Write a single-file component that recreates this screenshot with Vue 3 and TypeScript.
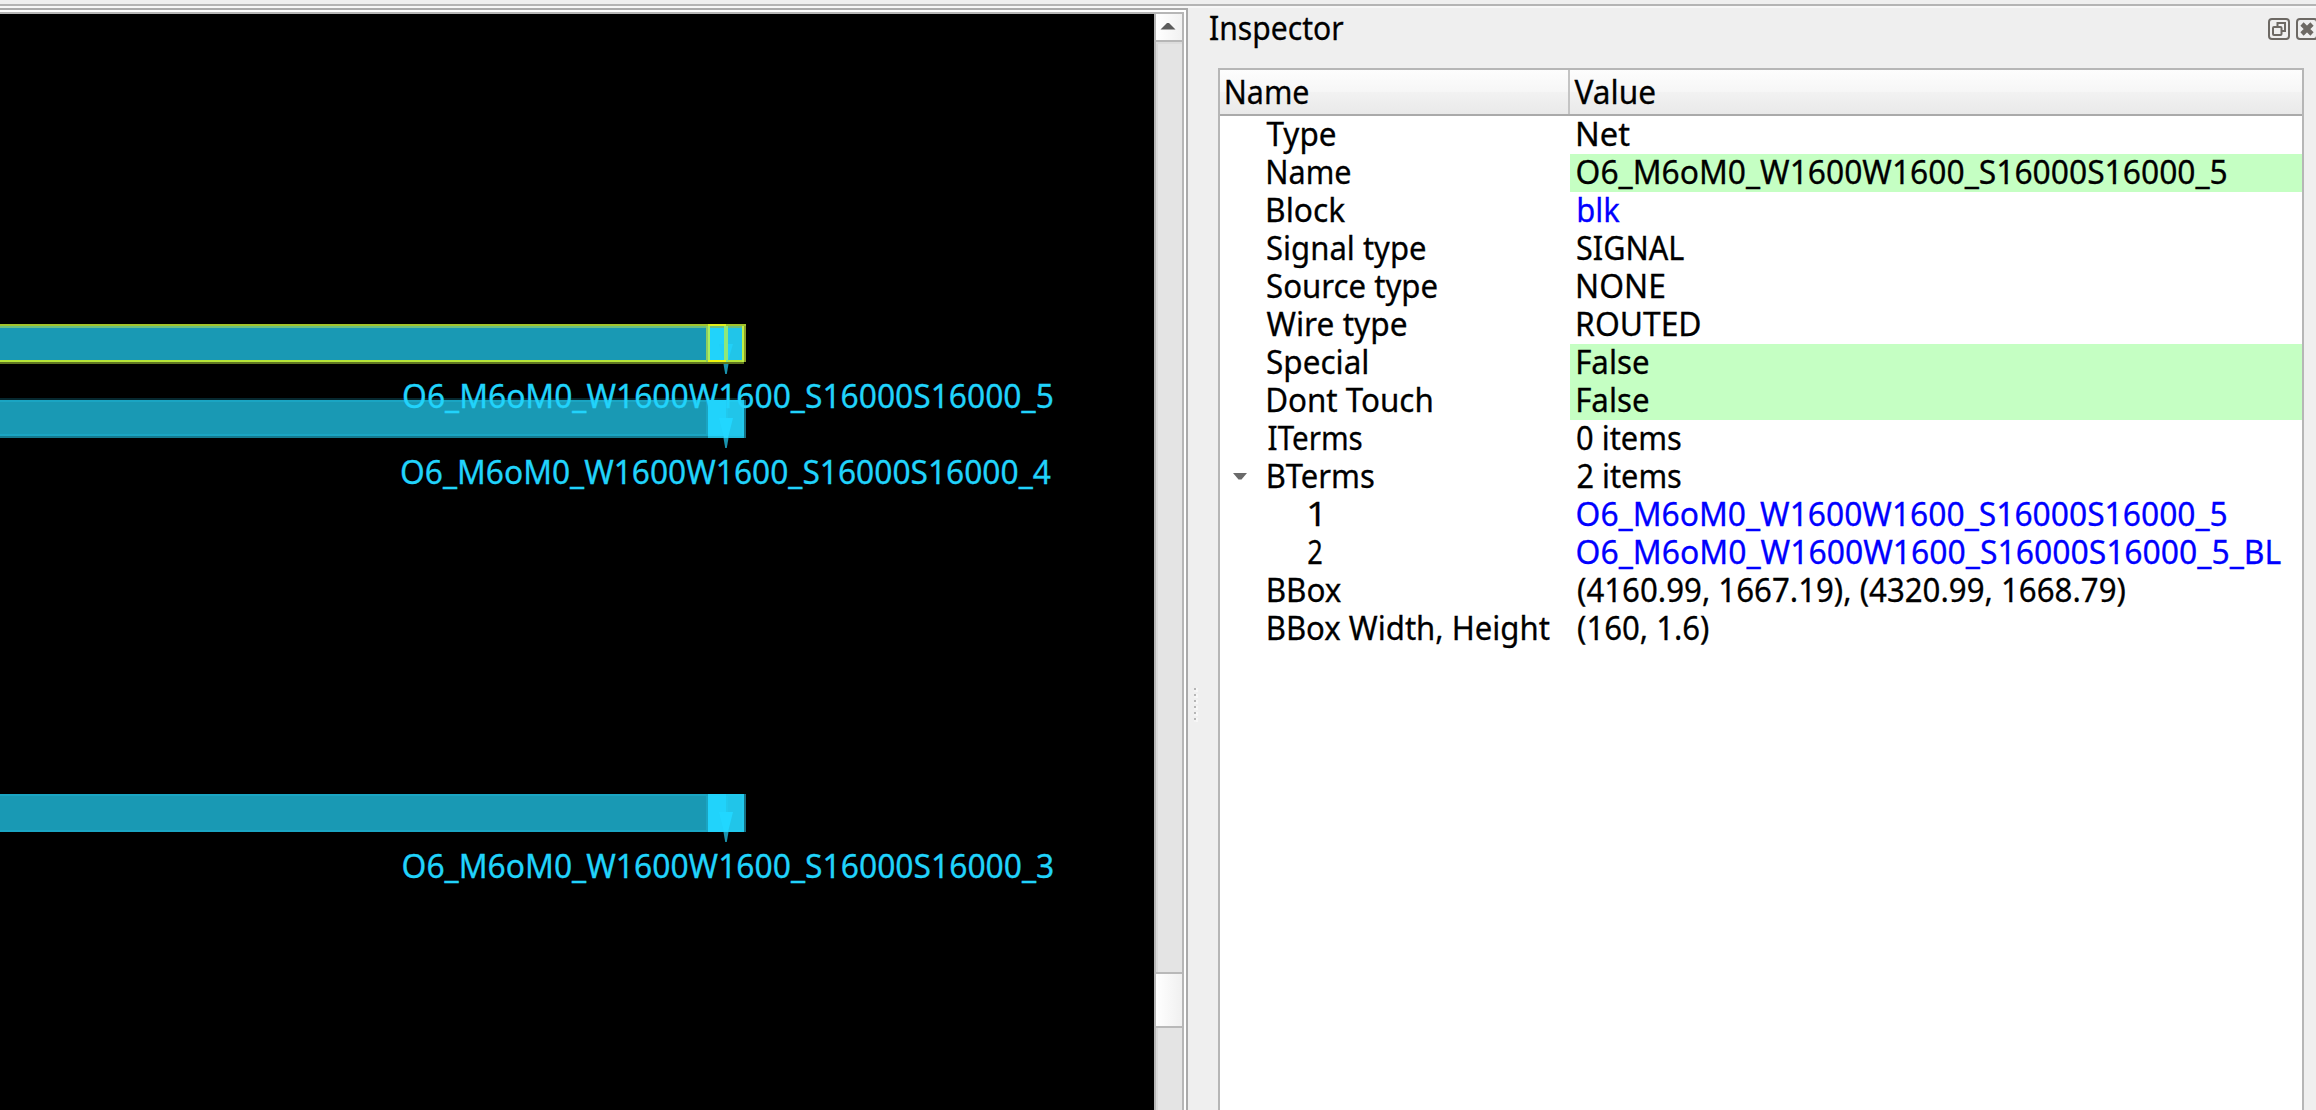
<script setup lang="ts">
import type { Directive } from 'vue'

interface Row {
  name: string
  value: string
  /** ink extents [start, end] of the name and value, in window px */
  n: [number, number]
  v: [number, number]
  kind?: 'link' | 'edit'
  child?: boolean
  open?: boolean
}

const rows: Row[] = [
  { name: 'Type', value: 'Net', n: [1266.5, 1335], v: [1578, 1630] },
  { name: 'Name', value: 'O6_M6oM0_W1600W1600_S16000S16000_5', n: [1268, 1350], v: [1577.5, 2226], kind: 'edit' },
  { name: 'Block', value: 'blk', n: [1268, 1345.5], v: [1578, 1620], kind: 'link' },
  { name: 'Signal type', value: 'SIGNAL', n: [1267, 1425], v: [1577, 1684] },
  { name: 'Source type', value: 'NONE', n: [1267, 1436.5], v: [1578, 1664.5] },
  { name: 'Wire type', value: 'ROUTED', n: [1266.5, 1406], v: [1578, 1700.5] },
  { name: 'Special', value: 'False', n: [1267, 1367], v: [1578, 1648], kind: 'edit' },
  { name: 'Dont Touch', value: 'False', n: [1268, 1431.5], v: [1578, 1648], kind: 'edit' },
  { name: 'ITerms', value: '0 items', n: [1268.5, 1362], v: [1577, 1681] },
  { name: 'BTerms', value: '2 items', n: [1268.5, 1374], v: [1577.5, 1681], open: true },
  { name: '1', value: 'O6_M6oM0_W1600W1600_S16000S16000_5', n: [1308.5, 1319.5], v: [1577.5, 2226], kind: 'link', child: true },
  { name: '2', value: 'O6_M6oM0_W1600W1600_S16000S16000_5_BL', n: [1308, 1322], v: [1577.5, 2281], kind: 'link', child: true },
  { name: 'BBox', value: '(4160.99, 1667.19), (4320.99, 1668.79)', n: [1268.5, 1341], v: [1578, 2125] },
  { name: 'BBox Width, Height', value: '(160, 1.6)', n: [1268.5, 1550], v: [1578, 1708.5] },
]

const wires = [
  { top: 324, selected: true },
  { top: 400, selected: false },
  { top: 794, selected: false },
]

const labels = [
  { text: 'O6_M6oM0_W1600W1600_S16000S16000_5', x: [404, 1052], y: 408 },
  { text: 'O6_M6oM0_W1600W1600_S16000S16000_4', x: [402, 1051], y: 484 },
  { text: 'O6_M6oM0_W1600W1600_S16000S16000_3', x: [403.5, 1052.5], y: 878 },
]

// Scales a single line of text so that its ink spans exactly the given range.
const ctx = document.createElement('canvas').getContext('2d')!
const vFit: Directive<HTMLElement, number[]> = {
  mounted(el, { value: [from, to] }) {
    const cs = getComputedStyle(el)
    ctx.font = `${cs.fontSize} ${cs.fontFamily}`
    const m = ctx.measureText(el.textContent ?? '')
    const scale = (to - from) / (m.actualBoundingBoxRight + m.actualBoundingBoxLeft)
    const dx = from - el.getBoundingClientRect().left + m.actualBoundingBoxLeft * scale
    el.style.transform = `translateX(${dx}px) scaleX(${scale})`
  },
}
</script>

<template>
  <div class="window">
    <div class="viewer">
      <div class="canvas">
        <svg width="1154" height="1096" viewBox="0 14 1154 1096" shape-rendering="crispEdges">
          <g v-for="w in wires" :key="w.top">
            <template v-if="w.selected">
              <rect x="0" :y="w.top + 4" width="706" height="32" fill="#1999b4" />
              <rect x="708" :y="w.top + 4" width="18" height="32" fill="#21d3fb" />
              <rect x="726" :y="w.top + 4" width="16" height="32" fill="#21c5e9" />
              <path d="M719 344h14l-5 17h-4z" fill="#21d0f8" shape-rendering="auto" />
              <rect x="0" :y="w.top" width="746" height="2" fill="#a2c32c" />
              <rect x="0" :y="w.top + 2" width="744" height="2" fill="#68c086" />
              <rect x="0" :y="w.top + 36" width="744" height="2" fill="#b6e538" />
              <rect x="0" :y="w.top + 38" width="744" height="2" fill="#5f7720" />
              <rect x="706" :y="w.top + 2" width="2" height="36" fill="#8fcc60" />
              <rect x="708" :y="w.top + 2" width="2" height="36" fill="#a8f062" />
              <rect x="724" :y="w.top + 2" width="4" height="36" fill="#8ee87a" />
              <rect x="742" :y="w.top + 2" width="2" height="36" fill="#c0f045" />
              <rect x="744" :y="w.top + 2" width="2" height="36" fill="#8ba02b" />
              <rect x="708" :y="w.top" width="18" height="2" fill="#e1ee1b" />
              <rect x="708" :y="w.top + 36" width="18" height="2" fill="#f1f80d" />
            </template>
            <template v-else>
              <rect x="0" :y="w.top" width="708" height="38" fill="#1aa5c3" />
              <rect x="0" :y="w.top + 2" width="706" height="34" fill="#1999b4" />
              <rect x="708" :y="w.top" width="18" height="38" fill="#21d3fb" />
              <rect x="726" :y="w.top" width="18" height="38" fill="#21c9ed" />
              <rect x="728" :y="w.top + 2" width="14" height="34" fill="#21c5e9" />
              <rect x="744" :y="w.top" width="2" height="38" fill="#156f82" />
              <template v-if="w.top === 400">
                <rect x="0" y="398" width="744" height="2" fill="#06272e" />
                <rect x="0" y="434" width="706" height="2" fill="#1aa5c3" />
                <rect x="0" y="436" width="708" height="2" fill="#15798e" />
                <rect x="708" y="436" width="36" height="2" fill="#20bbdc" />
              </template>
              <path :d="`M719 ${w.top + 18}h14l-5 20h-4z`" fill="#21d7ff" shape-rendering="auto" />
            </template>
            <path
              :d="`M723.5 ${w.top + (w.selected ? 40 : 38)}h5l-1.7 10h-1.6z`"
              fill="#1993ae" shape-rendering="auto"
            />
          </g>
        </svg>
        <span
          v-for="l in labels" :key="l.y" v-fit="l.x" class="text net"
          :style="{ top: l.y - 45 + 'px' }"
        >{{ l.text }}</span>
      </div>
      <div class="scroll">
        <div class="step">
          <svg width="16" height="8" viewBox="0 0 16 8"><path d="M.5 7.500L7 1h2l6.500 6.500z" fill="#5b5b5b" /></svg>
        </div>
        <div class="trough upper"></div>
        <div class="thumb"></div>
        <div class="trough lower"></div>
      </div>
    </div>

    <div class="splitter"><i v-for="i in 6" :key="i"></i></div>

    <section class="dock">
      <header class="title">
        <span v-fit="[1210, 1344]" class="text">Inspector</span>
        <div class="buttons">
          <svg width="22" height="22" viewBox="0 0 22 22" fill="none" stroke="#6d6964" stroke-width="2">
            <rect x="1" y="1" width="20" height="20" rx="3" />
            <path d="M9.500 8V5H17v8h-3" />
            <rect x="5" y="9" width="8.500" height="8" rx="1" />
          </svg>
          <svg width="22" height="22" viewBox="0 0 22 22" fill="none" stroke="#6d6964" stroke-width="2">
            <rect x="1" y="1" width="20" height="20" rx="3" />
            <path d="M6 6l10 10M16 6L6 16" stroke-width="4.600" />
          </svg>
        </div>
      </header>
      <div class="tree">
        <div class="head">
          <div class="col-name"><span v-fit="[1226.5, 1308]" class="text">Name</span></div>
          <div class="col-value"><span v-fit="[1574.5, 1654.5]" class="text">Value</span></div>
        </div>
        <div v-for="(r, i) in rows" :key="i" class="row">
          <div class="cell name" :class="{ child: r.child }">
            <svg v-if="r.open" class="arrow" width="16" height="8" viewBox="0 0 16 8">
              <path d="M1 1h14L9.500 7.500h-3z" fill="#6a6a6a" />
            </svg>
            <span v-fit="r.n" class="text">{{ r.name }}</span>
          </div>
          <div class="cell value" :class="r.kind"><span v-fit="r.v" class="text">{{ r.value }}</span></div>
        </div>
      </div>
    </section>
  </div>
</template>

<style>
body { background: #efefef; overflow: hidden; }
</style>

<style scoped>
* { box-sizing: border-box; }
.window {
  width: 2316px;
  height: 1110px;
  display: flex;
  overflow: hidden;
  background: linear-gradient(#efefef 4px, #b4b4b4 4px 6px, #f7f7f7 6px 8px, #efefef 8px);
  font-family: 'Noto Sans', 'Open Sans', sans-serif;
  font-size: 33px;
  color: #000;
  -webkit-text-stroke: 0.3px;
}
.text {
  display: block;
  width: fit-content;
  height: 38px;
  white-space: pre;
  line-height: 38px;
  transform-origin: 0 50%;
}
.viewer {
  width: 1188px;
  height: 1102px;
  margin-top: 8px;
  flex: none;
  display: flex;
  background: #fff;
  border-top: 2px solid #aaa;
  border-right: 2px solid #aaa;
  padding: 2px 2px 0 0;
}
.canvas {
  position: relative;
  width: 1154px;
  height: 1098px;
  background: #000;
  border-top: 2px solid #b6b6b6;
  flex: none;
}
.canvas svg { display: block; }
.net { position: absolute; left: 0; color: #21d3fb; }
.scroll {
  width: 30px;
  height: 1098px;
  border: solid #b6b6b6;
  border-width: 2px 2px 0 2px;
  display: flex;
  flex-direction: column;
  background: #e4e4e4;
}
.step {
  height: 28px;
  border-bottom: 2px solid #b6b6b6;
  background: linear-gradient(90deg, #fff, #f1f1f1);
  display: flex;
  align-items: flex-start;
  padding: 8px 0 0 4px;
}
.trough { background: linear-gradient(90deg, #d9d9d9 2px, #e4e4e4 2px); }
.upper { height: 930px; border-top: 2px solid #dcdcdc; }
.thumb {
  height: 56px;
  border: solid #b9b9b9;
  border-width: 2px 0;
  background: linear-gradient(90deg, #fff, #f0f0f0);
}
.lower { flex: 1; }
.splitter {
  width: 30px;
  flex: none;
  padding: 688px 0 0 6px;
  display: flex;
  flex-direction: column;
  gap: 4px;
}
.splitter i {
  flex: none;
  width: 2px;
  height: 2px;
  background: #b6b6b6;
  box-shadow: 2px 0 #f7f7f7, 0 2px #f4f4f4, 2px 2px #f7f7f7;
}
.dock { flex: 1; min-width: 0; display: flex; flex-direction: column; }
.title {
  height: 68px;
  flex: none;
  display: flex;
  justify-content: space-between;
  padding-top: 9px;
}
.buttons { display: flex; gap: 6px; padding-top: 9px; margin-right: -2px; }
.buttons svg { flex: none; }
.tree {
  width: 1086px;
  flex: 1;
  background: #fff;
  border: solid #b6b6b6;
  border-width: 2px 2px 0 2px;
}
.head {
  height: 46px;
  display: flex;
  border-bottom: 2px solid #aaa;
  background: linear-gradient(#fdfdfd, #f6f6f6 50%, #f2f2f2 50%, #e9e9e9);
}
.head .text { margin-top: 3px; }
.col-name { width: 350px; border-right: 2px solid #c4c4c4; }
.row { height: 38px; display: flex; }
.cell { height: 38px; display: flex; }
.cell .text { margin-top: -1px; }
.name { position: relative; width: 350px; padding-left: 46px; }
.child { padding-left: 86px; }
.arrow { position: absolute; left: 12px; top: 14px; }
.value { flex: 1; min-width: 0; padding-left: 7px; }
.link { color: #00f; }
.edit { background: #c5ffc3; }
</style>
